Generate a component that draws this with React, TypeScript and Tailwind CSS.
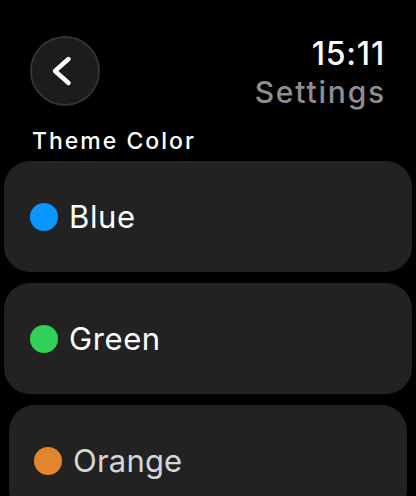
type ThemeOption = {
    name: string;
    dot: string;
    dim?: boolean;
};

const options: ThemeOption[] = [
    { name: 'Blue', dot: 'bg-[#0a95ff]' },
    { name: 'Green', dot: 'bg-[#30d158]' },
    { name: 'Orange', dot: 'bg-[#e3842f]', dim: true },
];

export default function App() {
    return (
        <div
            className="h-[496px] w-[416px] overflow-hidden bg-black text-white"
            style={{ fontFamily: 'Inter, "Noto Sans", sans-serif' }}
        >
            <header className="flex items-start justify-between pl-[30px] pr-[32px] pt-[36px]">
                <button
                    type="button"
                    className="flex h-[70px] w-[70px] items-center justify-center rounded-full border-2 border-[#333335] bg-[#1c1c1e]"
                >
                    {/* back chevron */}
                    <svg width="70" height="70" viewBox="0 0 70 70" className="shrink-0">
                        <polyline
                            points="38.5,23 25,35 38.5,47"
                            fill="none"
                            stroke="white"
                            strokeWidth="4.4"
                            strokeLinecap="round"
                            strokeLinejoin="round"
                        />
                    </svg>
                </button>
                <div className="flex flex-col items-end">
                    <span className="mt-[2px] -mr-[1px] text-[32px] font-medium leading-none tracking-[0.8px]">15:11</span>
                    <span className="mt-[7px] -mr-[2px] text-[30px] font-medium leading-none tracking-[1.8px] text-[#8d8d92]">
                        Settings
                    </span>
                </div>
            </header>

            <h2 className="mt-[23px] pl-[32px] text-[23px] font-medium leading-none tracking-[2px]">
                Theme Color
            </h2>

            <div className="mt-[8px] flex flex-col gap-[11px]">
                {options.map((opt) => (
                    <div
                        key={opt.name}
                        className={`flex h-[111px] items-center gap-[11px] rounded-[26px] bg-[#222222] ${opt.dim ? 'mx-[9px] px-[25px]' : 'mx-[4px] px-[26px]'}`}
                    >
                        <span className={`h-[28px] w-[28px] shrink-0 rounded-full ${opt.dot}`} />
                        <span
                            className={`text-[31px] leading-none ${opt.dim ? 'tracking-[0.2px] text-[#d6d6d6]' : 'tracking-[0.6px] text-white'}`}
                        >
                            {opt.name}
                        </span>
                    </div>
                ))}
            </div>
        </div>
    );
}
